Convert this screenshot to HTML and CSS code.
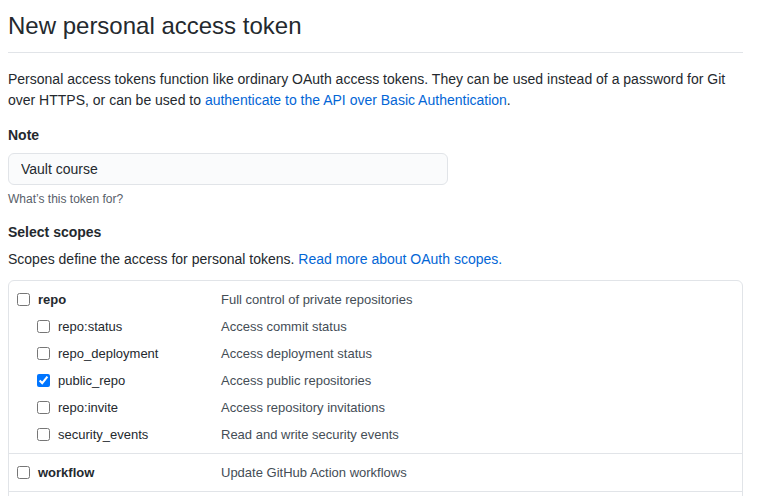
FILE: index.html
```html
<!DOCTYPE html>
<html lang="en">
<head>
<meta charset="utf-8">
<title>New personal access token</title>
<link rel="stylesheet" href="styles.css">
</head>
<body>
<main class="page">
  <div class="subhead">
    <h2 class="subhead-heading">New personal access token</h2>
  </div>
  <p class="intro">Personal access tokens function like ordinary OAuth access tokens. They can be used instead of a password for Git over HTTPS, or can be used to <a href="#">authenticate to the API over Basic Authentication</a>.</p>

  <div class="form-group">
    <label class="label" for="note">Note</label>
    <input id="note" class="form-control" type="text" value="Vault course">
    <p class="note">What’s this token for?</p>
  </div>

  <div class="form-group scopes-group">
    <div class="label">Select scopes</div>
    <p class="scopes-desc">Scopes define the access for personal tokens. <a href="#">Read more about OAuth scopes.</a></p>
    <div class="scopes">
      <div class="scope-group">
        <label class="scope-row parent">
          <span class="name"><input type="checkbox"><span>repo</span></span>
          <span class="desc">Full control of private repositories</span>
        </label>
        <label class="scope-row child">
          <span class="name"><input type="checkbox"><span>repo:status</span></span>
          <span class="desc">Access commit status</span>
        </label>
        <label class="scope-row child">
          <span class="name"><input type="checkbox"><span>repo_deployment</span></span>
          <span class="desc">Access deployment status</span>
        </label>
        <label class="scope-row child">
          <span class="name"><input type="checkbox" checked><span>public_repo</span></span>
          <span class="desc">Access public repositories</span>
        </label>
        <label class="scope-row child">
          <span class="name"><input type="checkbox"><span>repo:invite</span></span>
          <span class="desc">Access repository invitations</span>
        </label>
        <label class="scope-row child">
          <span class="name"><input type="checkbox"><span>security_events</span></span>
          <span class="desc">Read and write security events</span>
        </label>
      </div>
      <div class="scope-group">
        <label class="scope-row parent">
          <span class="name"><input type="checkbox"><span>workflow</span></span>
          <span class="desc">Update GitHub Action workflows</span>
        </label>
      </div>
      <div class="scope-group scope-more"></div>
    </div>
  </div>
</main>
</body>
</html>
```
FILE: styles.css
```css
html, body {
  margin: 0;
  padding: 0;
  background: #ffffff;
}
body {
  font-family: "Liberation Sans", Arial, sans-serif;
  font-size: 14px;
  line-height: 1.5;
  color: #24292e;
  overflow: hidden;
}
a {
  color: #0366d6;
  text-decoration: none;
}
.page {
  width: 735px;
  padding: 8px 0 0 8px;
}
.subhead {
  padding-bottom: 8px;
  border-bottom: 1px solid #e1e4e8;
  margin-bottom: 16px;
}
.subhead-heading {
  margin: 0;
  font-size: 24px;
  font-weight: 400;
  line-height: 36px;
}
.intro {
  margin: 0 0 14px;
  line-height: 21px;
}
.form-group {
  display: flex;
  flex-direction: column;
  align-items: flex-start;
}
.label {
  display: block;
  font-weight: 700;
  line-height: 21px;
  margin-bottom: 7px;
}
.form-control {
  box-sizing: border-box;
  width: 440px;
  height: 32px;
  padding: 5px 12px;
  font-family: inherit;
  font-size: 14px;
  line-height: 20px;
  color: #24292e;
  background: #fafbfc;
  border: 1px solid #e1e4e8;
  border-radius: 6px;
  outline: none;
  margin: 0;
}
.note {
  margin: 5px 0 0;
  font-size: 12px;
  line-height: 18px;
  color: #586069;
}
.scopes-group {
  margin-top: 14px;
}
.scopes-group .label {
  margin-bottom: 6px;
}
.scopes-desc {
  margin: 0 0 10px;
  line-height: 21px;
}
.scopes {
  align-self: stretch;
  border: 1px solid #e1e4e8;
  border-radius: 6px;
}
.scope-group {
  padding: 5px 0;
  border-top: 1px solid #e1e4e8;
}
.scope-group:first-child {
  border-top: 0;
}
.scope-more {
  height: 27px;
}
.scope-row {
  display: grid;
  grid-template-columns: 204px 1fr;
  align-items: center;
  height: 27px;
  padding-left: 8px;
  font-size: 13px;
}
.name {
  display: flex;
  align-items: center;
  gap: 8px;
}
.child .name {
  padding-left: 20px;
}
.parent .name {
  font-weight: 700;
}
.name input {
  margin: 0;
  width: 13px;
  height: 13px;
}
.desc {
  color: #444d56;
}
```
